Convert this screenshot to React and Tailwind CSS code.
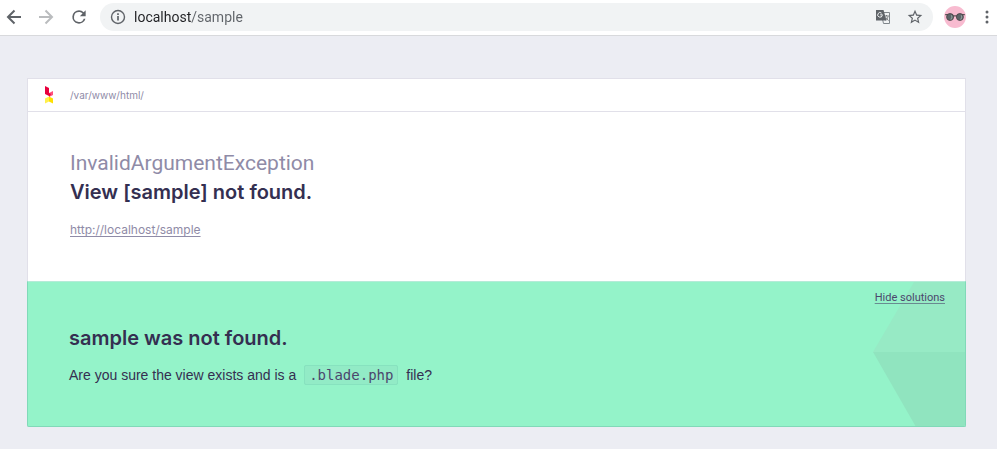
import React, { useState } from "react";

function ArrowLeft() {
  return (
    <svg viewBox="0 0 16 16" className="size-4" fill="none" stroke="currentColor" strokeWidth="2">
      <path d="M15 8H2.5M8.500 1.500L2 8l6.500 6.500" />
    </svg>
  );
}

function Toolbar() {
  const [url, setUrl] = useState("localhost/sample");

  return (
    <header className="flex items-center h-9 pl-1.5 pb-0.5 bg-white border-b border-[#d8d9dc] text-[#5f6368]">
      <button aria-label="Back" className="mr-4">
        <ArrowLeft />
      </button>
      <button aria-label="Forward" className="mr-4 rotate-180 text-[#babcbe]">
        <ArrowLeft />
      </button>
      <button aria-label="Reload" className="mr-3">
        <svg viewBox="0 0 24 24" className="size-5 -m-px" fill="currentColor">
          <path d="M17.650 6.350A7.958 7.958 0 0 0 12 4a8 8 0 1 0 7.730 10h-2.080A6 6 0 1 1 12 6c1.660 0 3.140.69 4.220 1.780L13 11h7V4z" />
        </svg>
      </button>

      {/* Address bar */}
      <div className="flex flex-1 items-center h-7 pl-2.5 pr-2.5 rounded-full bg-[#f1f3f4]">
        <button aria-label="Site information" className="mr-2">
          <svg viewBox="0 0 16 16" className="size-4" fill="none" stroke="currentColor">
            <circle cx="8" cy="8" r="6.500" strokeWidth="1.400" />
            <path d="M8 7v4.500M8 4.300V6" strokeWidth="1.700" />
          </svg>
        </button>
        <input
          aria-label="Address"
          value={url}
          onChange={(e) => setUrl(e.target.value)}
          className="flex-1 min-w-0 h-5 font-[Roboto,sans-serif] text-sm outline-none caret-black text-transparent bg-clip-text bg-[linear-gradient(to_right,#202124_58px,#5f6368_58px)]"
        />
        <button aria-label="Translate this page" className="mr-4">
          <svg viewBox="0 0 16 16" className="size-4">
            <path d="M6 3.500h8.500v11H8.500z" fill="#f1f3f4" stroke="#80868b" />
            <path d="M1 1h7.500l3 10.500H1z" fill="#5f6368" />
            <path d="M7.600 5.800H5.200M7.300 6.200A2.300 2.300 0 1 1 6.600 4.200" fill="none" stroke="#f1f3f4" />
            <path d="M9.500 7h4.500M11.500 6v1M13 7.500c-.4 1.800-1.300 2.800-2.500 3.700M11 8.500l2.500 3.200" fill="none" stroke="#5f6368" strokeWidth=".8" />
          </svg>
        </button>
        <button aria-label="Bookmark this page">
          <svg viewBox="1 1 22 22" className="size-4" fill="currentColor">
            <path d="M22 9.240l-7.190-.62L12 2 9.190 8.630 2 9.240l5.460 4.730L5.820 21 12 17.270 18.180 21l-1.630-7.030zM12 15.400l-3.760 2.270 1-4.280-3.320-2.880 4.380-.38L12 6.100l1.710 4.040 4.380.38-3.320 2.880 1 4.280z" />
          </svg>
        </button>
      </div>

      <button aria-label="Profile" className="ml-2.5 mr-3">
        <svg viewBox="0 0 22 22" className="size-6">
          <circle cx="11" cy="11" r="10" fill="#f8bbd0" />
          <path d="M2 8.800h7M13 8.800h7M9 10h4" stroke="#5d5257" />
          <circle cx="6.500" cy="11" r="3.200" fill="#5d6468" stroke="#4d4448" strokeWidth=".8" />
          <circle cx="15.500" cy="11" r="3.200" fill="#5d6468" stroke="#4d4448" strokeWidth=".8" />
          <path d="M7.500 9.500a2.300 2.300 0 0 1-.5 3.700M16.500 9.500a2.300 2.300 0 0 1-.5 3.700" stroke="#93a2a1" fill="none" />
        </svg>
      </button>
      <button aria-label="Menu" className="w-4 mr-0.5">
        <svg viewBox="0 0 16 16" className="size-4" fill="currentColor">
          <circle cx="8" cy="3" r="1.500" />
          <circle cx="8" cy="8" r="1.500" />
          <circle cx="8" cy="13" r="1.500" />
        </svg>
      </button>
    </header>
  );
}

function Logo() {
  return (
    <svg viewBox="0 0 10 18" className="w-2.5 h-[18px]">
      <path d="M1 0l4 2v8L1 8z" fill="#e8003d" />
      <path d="M5 7l4-2v4l-4 2z" fill="#ff4f7b" />
      <path d="M5 7l2 1-2 3z" fill="#e8003d" />
      <path d="M1 12.500l4-2v5l-4 2z" fill="#fff04d" />
      <path d="M5 10.500l4 2v5l-4-2z" fill="#ffe000" />
    </svg>
  );
}

function Solution({ open, onToggle }) {
  return (
    <section className="relative overflow-hidden -mx-px -mb-px border border-[#81d9b8] border-t-[#b5ebd8] rounded-b-xs bg-[#94f3c9] px-[41px] pt-10 pb-[41px] text-[#342f51]">
      {/* Faded hexagon in the corner */}
      <svg
        viewBox="0 0 92 145"
        preserveAspectRatio="xMaxYMin slice"
        className="absolute top-0 right-0 w-[92px] h-full"
      >
        <path d="M41 0h51v70H0z" fill="#97eac5" />
        <path d="M0 70h92v75H43z" fill="#90e4bf" />
      </svg>
      <button
        onClick={onToggle}
        className="absolute top-2 right-5 font-[Roboto,sans-serif] text-[11px] leading-4 text-[#4b476d] underline underline-offset-2 decoration-[#4b476d]/60"
      >
        {open ? "Hide solutions" : "Show solutions"}
      </button>
      {open && (
        <div className="relative">
          <h2 className="text-xl leading-8 font-semibold">sample was not found.</h2>
          <p className="mt-[11px] font-['Liberation_Sans',sans-serif] text-sm leading-5">
            Are you sure the view exists and is a{" "}
            <code className="mx-1 px-1 py-px rounded-xs border border-[#87e2bf] bg-[#92ebc6] font-['DejaVu_Sans_Mono',monospace] text-sm text-[#4b476d]">
              .blade.php
            </code>{" "}
            file?
          </p>
        </div>
      )}
    </section>
  );
}

export default function App() {
  const [open, setOpen] = useState(true);

  return (
    <div className="min-h-screen bg-[#ecedf3] font-[Inter,sans-serif]">
      <Toolbar />
      <main className="pt-[42px] pl-[27px] pr-[31px] pb-5">
        <div className="border border-[#e1e0e9] bg-white">
          <div className="flex items-center h-[33px] px-4 gap-4 border-b border-[#e1e0e9]">
            <Logo />
            <span className="text-[10px] text-[#8f8ba7]">/var/www/html/</span>
          </div>
          <div className="px-[42px] pt-[37px] pb-[41px]">
            <h1 className="text-xl leading-[29px]">
              <span className="block font-[Roboto,sans-serif] text-[21px] text-[#8f8ba7]">
                InvalidArgumentException
              </span>
              <span className="block font-semibold text-[#342f51]">View [sample] not found.</span>
            </h1>
            <a
              href="http://localhost/sample"
              className="inline-block mt-[13px] text-xs leading-5 text-[#8f8ba7] underline underline-offset-2"
            >
              http://localhost/sample
            </a>
          </div>
          <Solution open={open} onToggle={() => setOpen(!open)} />
        </div>
      </main>
    </div>
  );
}
